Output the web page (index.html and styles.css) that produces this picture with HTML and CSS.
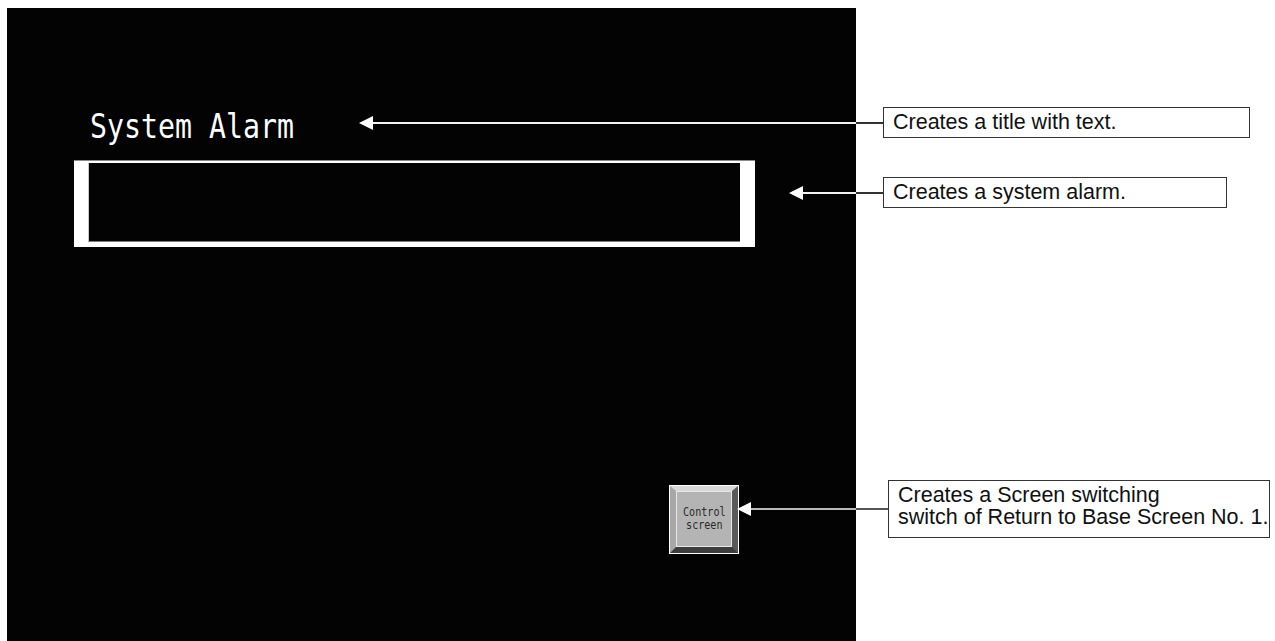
FILE: index.html
```html
<!DOCTYPE html>
<html>
<head>
<meta charset="utf-8">
<link rel="stylesheet" href="styles.css">
</head>
<body>
<div class="page">
  <div class="screen">
    <div class="title"><span class="title-text">System Alarm</span></div>
    <div class="alarm"><div class="alarm-inner"></div></div>
    <div class="switch">
      <div class="switch-face"><span class="switch-text">Control<br>screen</span></div>
    </div>
  </div>

  <div class="callout callout-title">
    <span class="head"></span>
    <span class="line line-title"></span>
    <div class="note note-title">Creates a title with text.</div>
  </div>
  <div class="callout callout-alarm">
    <span class="head"></span>
    <span class="line line-alarm"></span>
    <div class="note note-alarm">Creates a system alarm.</div>
  </div>
  <div class="callout callout-switch">
    <span class="head"></span>
    <span class="line line-switch"></span>
    <div class="note note-switch">Creates a Screen switching<br>switch of Return to Base Screen No. 1.</div>
  </div>
</div>
</body>
</html>
```

FILE: styles.css
```css
html, body {
  margin: 0;
  padding: 0;
  background: #ffffff;
}

.page {
  position: relative;
  width: 1275px;
  height: 641px;
  overflow: hidden;
  padding-top: 8px;
  box-sizing: border-box;
}

.screen {
  margin-left: 7px;
  width: 849px;
  height: 633px;
  background: #030303;
  box-sizing: border-box;
  padding-left: 67px;
  display: flex;
  flex-direction: column;
  align-items: flex-start;
}

.title {
  margin-top: 98px;
  margin-left: 16px;
  height: 40px;
  line-height: 40px;
}

.title-text {
  display: inline-block;
  font-family: "DejaVu Sans Mono", monospace;
  font-size: 34px;
  color: #ffffff;
  transform: scaleX(0.83);
  transform-origin: left center;
  white-space: nowrap;
}

.alarm {
  margin-top: 14px;
  width: 681px;
  height: 87px;
  box-sizing: border-box;
  background: #ffffff;
  border-top: 1px solid #8a8a8a;
  padding: 2px 15px 5px 14px;
  display: flex;
}

.alarm-inner {
  flex: 1;
  background: #030303;
  border-left: 1px solid #c8c8c8;
  border-bottom: 1px solid #7a7a7a;
}

.switch {
  margin-top: 238px;
  margin-left: 595px;
  width: 70px;
  height: 69px;
  box-sizing: border-box;
  border: 1px solid #ffffff;
  background: #b4b4b4;
  display: flex;
}

.switch-face {
  flex: 1;
  border-style: solid;
  border-width: 5px 6px 6px 6px;
  border-color: #d8d8d8 #5a5a5a #3c3c3c #a8a8a8;
  display: flex;
  align-items: center;
  justify-content: center;
  box-shadow: inset 0 0 0 1px #e8e8e8;
  background: #b4b4b4;
}

.switch-text {
  display: inline-block;
  font-family: "DejaVu Sans Mono", monospace;
  font-size: 12px;
  line-height: 13px;
  color: #2a2a2a;
  text-align: center;
  transform: scaleX(0.84);
}

.callout {
  position: absolute;
  display: flex;
  align-items: center;
}

.head {
  width: 0;
  height: 0;
  border-top: 7px solid transparent;
  border-bottom: 7px solid transparent;
  border-right: 14px solid #ffffff;
}

.line {
  height: 2px;
}

.note {
  box-sizing: border-box;
  border: 1px solid #333333;
  background: #ffffff;
  font-family: "Liberation Sans", Arial, sans-serif;
  font-size: 21.5px;
  color: #111111;
  padding-left: 9px;
  display: flex;
  align-items: center;
  white-space: nowrap;
}

.callout-title {
  left: 359px;
  top: 107px;
}
.line-title {
  width: 510px;
  background: linear-gradient(to right, #f2f2f2 0 483px, #333333 483px 100%);
}
.note-title {
  width: 367px;
  height: 31px;
}

.callout-alarm {
  left: 789px;
  top: 177px;
}
.line-alarm {
  width: 80px;
  background: linear-gradient(to right, #f2f2f2 0 53px, #333333 53px 100%);
}
.note-alarm {
  width: 344px;
  height: 31px;
}

.callout-switch {
  left: 737px;
  top: 480px;
}
.line-switch {
  width: 137px;
  background: linear-gradient(to right, #b8b8b8 0 105px, #555555 105px 100%);
}
.note-switch {
  width: 382px;
  height: 58px;
  line-height: 22px;
  padding-bottom: 6px;
}
```
